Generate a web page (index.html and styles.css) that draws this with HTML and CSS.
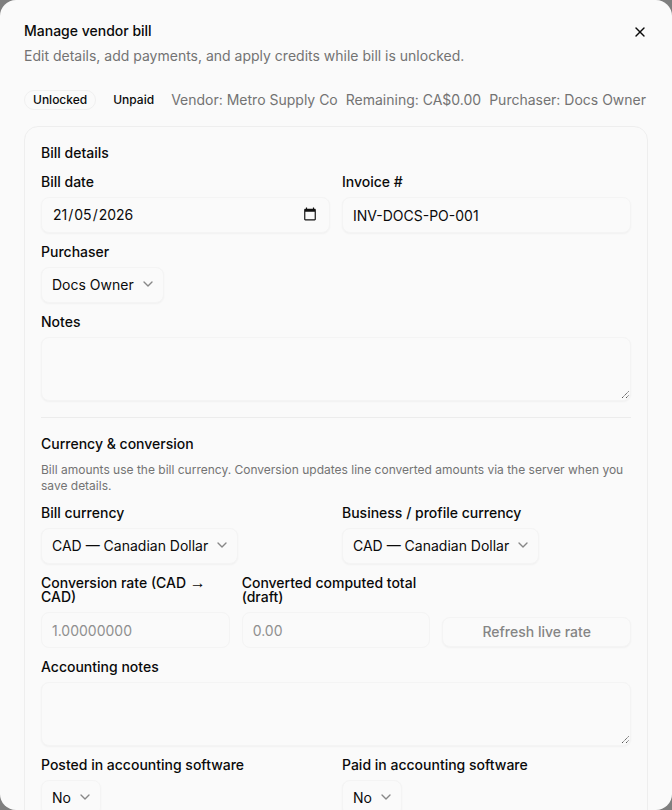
FILE: index.html
```html
<!DOCTYPE html>
<html lang="en">
<head>
<meta charset="utf-8">
<title>Manage vendor bill</title>
<link rel="stylesheet" href="styles.css">
</head>
<body>
<div class="dialog">
  <button class="close" aria-label="Close">
    <svg viewBox="0 0 24 24" width="16" height="16" fill="none" stroke="currentColor" stroke-width="2" stroke-linecap="round" stroke-linejoin="round"><path d="M18 6 6 18"/><path d="m6 6 12 12"/></svg>
  </button>
  <header class="head">
    <h2 class="title">Manage vendor bill</h2>
    <p class="desc">Edit details, add payments, and apply credits while bill is unlocked.</p>
  </header>
  <div class="meta">
    <span class="badge badge-outline">Unlocked</span>
    <span class="badge">Unpaid</span>
    <span class="meta-text">Vendor: Metro Supply Co</span>
    <span class="meta-text">Remaining: CA$0.00</span>
    <span class="meta-text">Purchaser: Docs Owner</span>
  </div>
  <section class="card">
    <h3 class="section-title">Bill details</h3>
    <div class="two">
      <div class="field">
        <label class="label">Bill date</label>
        <div class="control date"><span class="date-value"><span class="date-part">21</span>/<span class="date-part">05</span>/<span class="date-part">2026</span></span>
          <svg class="cal" viewBox="0 0 24 24" width="14" height="14"><path fill="#111" d="M20 3h-1V1h-2v2H7V1H5v2H4c-1.100 0-2 .9-2 2v16c0 1.100.9 2 2 2h16c1.100 0 2-.9 2-2V5c0-1.100-.9-2-2-2zm0 18H4V8h16v13z"/></svg>
        </div>
      </div>
      <div class="field">
        <label class="label">Invoice #</label>
        <div class="control">INV-DOCS-PO-001</div>
      </div>
    </div>
    <div class="field gap-top">
      <label class="label">Purchaser</label>
      <div class="control select">Docs Owner<svg class="chev" viewBox="0 0 24 24" width="16" height="16" fill="none" stroke="currentColor" stroke-width="2" stroke-linecap="round" stroke-linejoin="round"><path d="m6 9 6 6 6-6"/></svg></div>
    </div>
    <div class="field gap-top">
      <label class="label">Notes</label>
      <div class="control area"><svg class="grip" viewBox="0 0 9 9" width="9" height="9"><path d="M1 8 8 1M5 8 8 5" stroke="#555" stroke-width="1" stroke-dasharray="1.400 .6" fill="none"/></svg></div>
    </div>
    <hr class="rule">
    <h3 class="section-title">Currency &amp; conversion</h3>
    <p class="hint">Bill amounts use the bill currency. Conversion updates line converted amounts via the server when you save details.</p>
    <div class="two">
      <div class="field">
        <label class="label">Bill currency</label>
        <div class="control select">CAD — Canadian Dollar<svg class="chev" viewBox="0 0 24 24" width="16" height="16" fill="none" stroke="currentColor" stroke-width="2" stroke-linecap="round" stroke-linejoin="round"><path d="m6 9 6 6 6-6"/></svg></div>
      </div>
      <div class="field">
        <label class="label">Business / profile currency</label>
        <div class="control select">CAD — Canadian Dollar<svg class="chev" viewBox="0 0 24 24" width="16" height="16" fill="none" stroke="currentColor" stroke-width="2" stroke-linecap="round" stroke-linejoin="round"><path d="m6 9 6 6 6-6"/></svg></div>
      </div>
    </div>
    <div class="three">
      <div class="field">
        <label class="label tight">Conversion rate (CAD <span class="arrow">→</span> CAD)</label>
        <div class="control disabled">1.00000000</div>
      </div>
      <div class="field">
        <label class="label tight">Converted computed total (draft)</label>
        <div class="control disabled">0.00</div>
      </div>
      <button class="refresh">Refresh live rate</button>
    </div>
    <div class="field gap-top">
      <label class="label">Accounting notes</label>
      <div class="control area"><svg class="grip" viewBox="0 0 9 9" width="9" height="9"><path d="M1 8 8 1M5 8 8 5" stroke="#555" stroke-width="1" stroke-dasharray="1.400 .6" fill="none"/></svg></div>
    </div>
    <div class="two">
      <div class="field">
        <label class="label">Posted in accounting software</label>
        <div class="control select">No<svg class="chev" viewBox="0 0 24 24" width="16" height="16" fill="none" stroke="currentColor" stroke-width="2" stroke-linecap="round" stroke-linejoin="round"><path d="m6 9 6 6 6-6"/></svg></div>
      </div>
      <div class="field">
        <label class="label">Paid in accounting software</label>
        <div class="control select">No<svg class="chev" viewBox="0 0 24 24" width="16" height="16" fill="none" stroke="currentColor" stroke-width="2" stroke-linecap="round" stroke-linejoin="round"><path d="m6 9 6 6 6-6"/></svg></div>
      </div>
    </div>
  </section>
</div>
</body>
</html>
```
FILE: styles.css
```css
* { box-sizing: border-box; }
html, body { margin: 0; height: 100%; overflow: hidden; background: #7f7f7f; }
body { font-family: Inter, "Liberation Sans", sans-serif; color: #0a0a0a; }
.dialog { position: relative; width: 672px; height: 810px; overflow: hidden; background: #fafafa; border-radius: 16px; padding: 24px 24px 0; }
.close { position: absolute; top: 24px; right: 24px; width: 16px; height: 16px; padding: 0; border: 0; background: none; color: #0a0a0a; }
.close svg { display: block; }
.head { display: flex; flex-direction: column; gap: 8px; }
.title { margin: 0; font-size: 14px; line-height: 14px; font-weight: 500; }
.desc { margin: 0; font-size: 14px; line-height: 20px; color: #737373; }
.meta { display: flex; align-items: center; gap: 8px; margin-top: 24px; white-space: nowrap; }
.badge { font-size: 12px; line-height: 16px; font-weight: 500; padding: 1px 8px; border: 1px solid transparent; border-radius: 999px; }
.badge-outline { border-color: #f0f0f0; }
.meta-text { font-size: 14px; line-height: 20px; color: #737373; }
.card { margin-top: 16px; height: 800px; padding: 16px; background: #fafafa; border: 1px solid #eeeeee; border-radius: 14px; }
.section-title { margin: 0; font-size: 14px; line-height: 20px; font-weight: 500; }
.two { display: grid; grid-template-columns: 1fr 1fr; gap: 12px; margin-top: 12px; }
.three { display: grid; grid-template-columns: repeat(3, 1fr); gap: 12px; margin-top: 12px; align-items: end; }
.field { display: flex; flex-direction: column; align-items: flex-start; gap: 8px; min-width: 0; }
.gap-top { margin-top: 12px; }
.label { font-size: 14px; line-height: 14px; font-weight: 500; }
.tight { display: block; height: 28px; }
.arrow { font-family: "Liberation Sans", sans-serif; font-size: 16px; font-weight: 400; }
.control { display: flex; align-items: center; width: 100%; height: 36px; padding: 0 10px; font-size: 14px; background: #fafafa; border: 1px solid #f4f4f4; border-radius: 8px; box-shadow: 0 1px 2px rgba(0,0,0,.04); }
.date { justify-content: space-between; padding-right: 12px; padding-bottom: 2px; }
.date-part { padding: 0 1px; }
.cal { display: block; }
.select { width: auto; gap: 6px; padding-right: 7px; padding-bottom: 2px; }
.chev { color: #737373; opacity: .85; }
.area { position: relative; height: 64px; }
.grip { position: absolute; right: 0; bottom: 1px; }
.disabled { color: #8f8f8f; box-shadow: none; }
.refresh { height: 30px; margin-bottom: 1px; padding: 0 0 2px; font: 500 14px Inter, "Liberation Sans", sans-serif; color: #858585; background: #fafafa; border: 1px solid #f4f4f4; border-radius: 8px; box-shadow: 0 1px 2px rgba(0,0,0,.04); }
.rule { height: 1px; margin: 16px 0; border: 0; background: #ececec; }
.hint { margin: 8px 0 0; font-size: 12px; line-height: 16px; color: #737373; }
```
